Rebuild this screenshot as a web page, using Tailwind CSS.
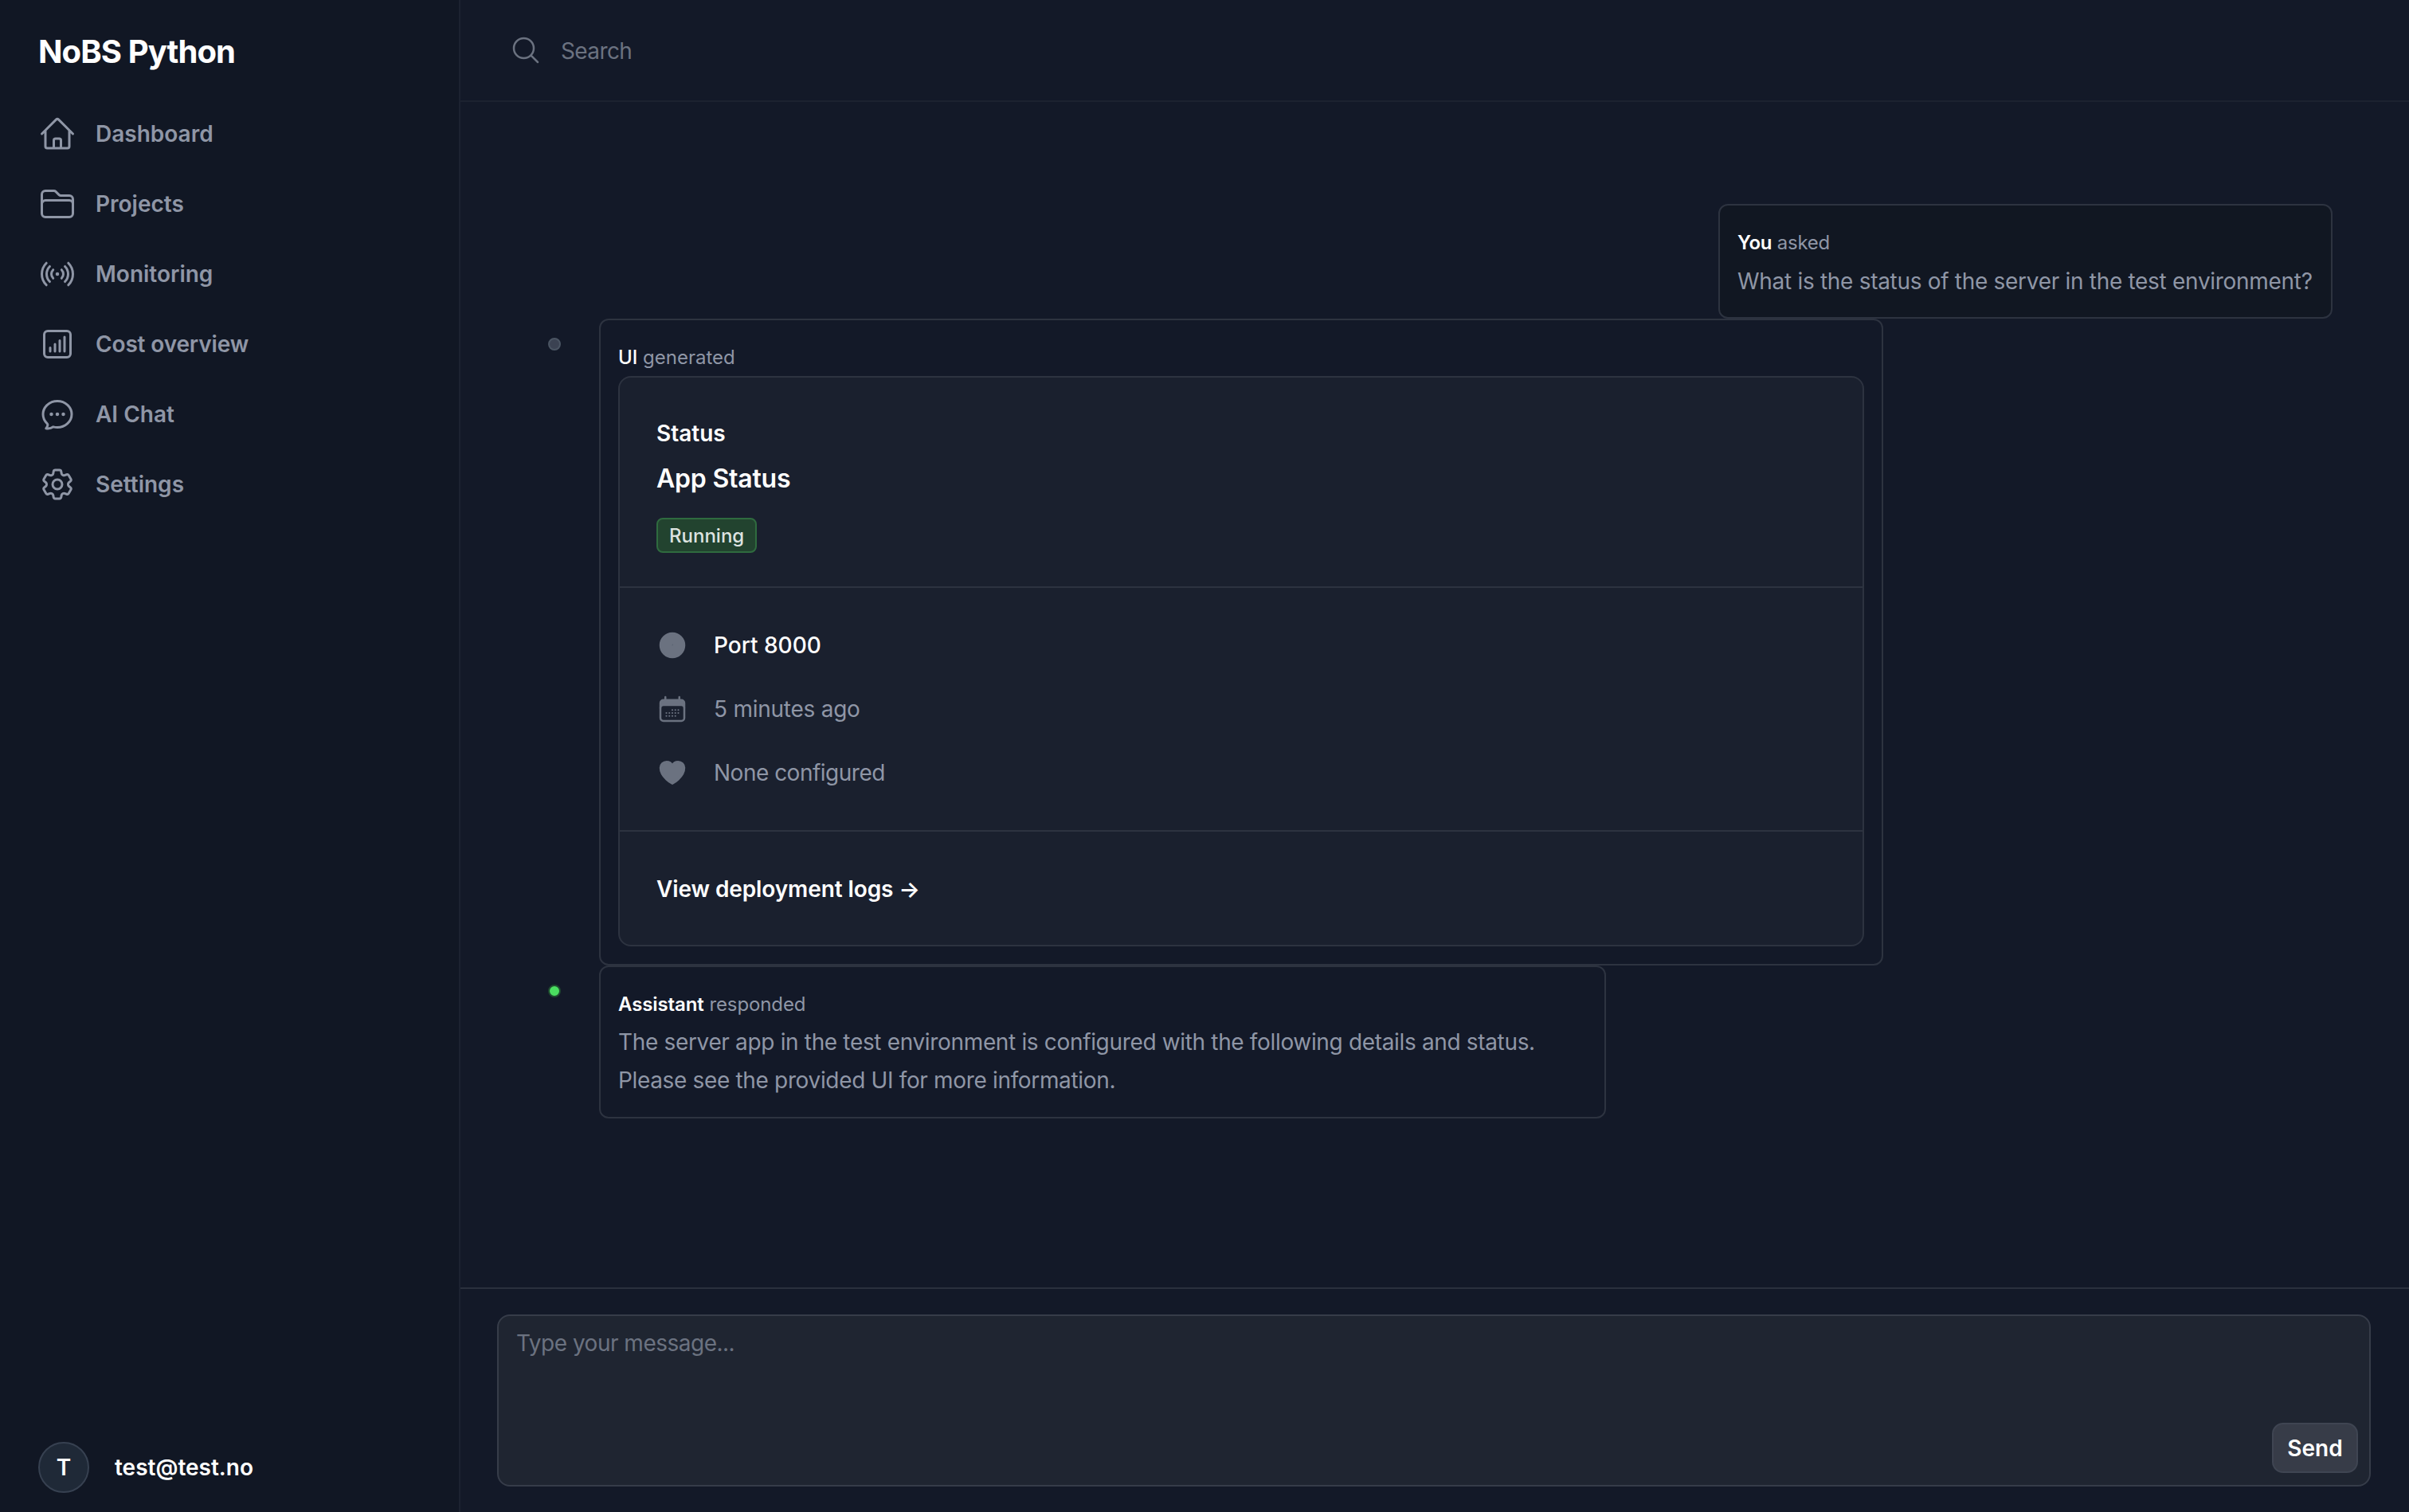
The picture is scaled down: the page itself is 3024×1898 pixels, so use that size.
<!DOCTYPE html>
<html lang="en">
<head>
<meta charset="utf-8">
<title>NoBS Python</title>
<script src="https://cdn.jsdelivr.net/npm/@tailwindcss/browser@4"></script>
</head>
<body class="m-0 bg-[#131928]">
<div class="flex h-[1898px] w-[3024px] overflow-hidden bg-[#131928] font-['Inter',sans-serif] text-[28px] leading-[48px] text-[#8f96a6]">

  <aside class="flex w-[578px] shrink-0 flex-col border-r-2 border-[#1c2230] bg-[#111724] pl-[48px] pt-[37px] pb-[24px]">
    <div class="h-[56px] text-[40px] font-bold leading-[56px] tracking-[-0.9px] text-white">NoBS Python</div>
    <nav class="mt-[31px] flex flex-col text-[#8f96a6]">
      <a class="flex h-[88px] items-center gap-[24px] font-semibold">
        <svg class="h-[48px] w-[48px]" fill="none" viewBox="0 0 24 24" stroke="currentColor" stroke-width="1.5" stroke-linecap="round" stroke-linejoin="round"><path d="m2.25 12 8.954-8.955c.44-.439 1.152-.439 1.591 0L21.75 12M4.5 9.75v10.125c0 .621.504 1.125 1.125 1.125H9.75v-4.875c0-.621.504-1.125 1.125-1.125h2.25c.621 0 1.125.504 1.125 1.125V21h4.125c.621 0 1.125-.504 1.125-1.125V9.75M8.25 21h8.25"/></svg>
        Dashboard</a>
      <a class="flex h-[88px] items-center gap-[24px] font-semibold">
        <svg class="h-[48px] w-[48px]" fill="none" viewBox="0 0 24 24" stroke="currentColor" stroke-width="1.5" stroke-linecap="round" stroke-linejoin="round"><path d="M2.25 12.75V12A2.25 2.25 0 0 1 4.5 9.75h15A2.25 2.25 0 0 1 21.75 12v.75m-8.69-6.44-2.12-2.12a1.5 1.5 0 0 0-1.061-.44H4.5A2.25 2.25 0 0 0 2.25 6v12a2.25 2.25 0 0 0 2.25 2.25h15A2.25 2.25 0 0 0 21.75 18V9a2.25 2.25 0 0 0-2.25-2.25h-5.379a1.5 1.5 0 0 1-1.06-.44Z"/></svg>
        Projects</a>
      <a class="flex h-[88px] items-center gap-[24px] font-semibold">
        <svg class="h-[48px] w-[48px]" fill="none" viewBox="0 0 24 24" stroke="currentColor" stroke-width="1.5" stroke-linecap="round" stroke-linejoin="round"><path d="M9.348 14.652a3.75 3.75 0 0 1 0-5.304m5.304 0a3.75 3.75 0 0 1 0 5.304m-7.425 2.121a6.75 6.75 0 0 1 0-9.546m9.546 0a6.75 6.75 0 0 1 0 9.546M5.106 18.894c-3.808-3.807-3.808-9.98 0-13.788m13.788 0c3.808 3.807 3.808 9.98 0 13.788M12 12h.008v.008H12V12Zm.375 0a.375.375 0 1 1-.75 0 .375.375 0 0 1 .75 0Z"/></svg>
        Monitoring</a>
      <a class="flex h-[88px] items-center gap-[24px] font-semibold tracking-[-0.15px]">
        <svg class="h-[48px] w-[48px]" fill="none" viewBox="0 0 24 24" stroke="currentColor" stroke-width="1.5" stroke-linecap="round" stroke-linejoin="round"><path d="M7.5 14.25v2.25m3-4.5v4.5m3-6.75v6.75m3-9v9M6 20.25h12A2.25 2.25 0 0 0 20.25 18V6A2.25 2.25 0 0 0 18 3.75H6A2.25 2.25 0 0 0 3.75 6v12A2.25 2.25 0 0 0 6 20.25Z"/></svg>
        Cost overview</a>
      <a class="flex h-[88px] items-center gap-[24px] font-semibold">
        <svg class="h-[48px] w-[48px]" fill="none" viewBox="0 0 24 24" stroke="currentColor" stroke-width="1.5" stroke-linecap="round" stroke-linejoin="round"><path d="M8.625 12a.375.375 0 1 1-.75 0 .375.375 0 0 1 .75 0Zm0 0H8.25m4.125 0a.375.375 0 1 1-.75 0 .375.375 0 0 1 .75 0Zm0 0H12m4.125 0a.375.375 0 1 1-.75 0 .375.375 0 0 1 .75 0Zm0 0h-.375M21 12c0 4.556-4.03 8.25-9 8.25a9.764 9.764 0 0 1-2.555-.337A5.972 5.972 0 0 1 5.41 20.97a5.969 5.969 0 0 1-.474-.065 4.48 4.48 0 0 0 .978-2.025c.09-.457-.133-.901-.467-1.226C3.93 16.178 3 14.189 3 12c0-4.556 4.03-8.25 9-8.25s9 3.694 9 8.25Z"/></svg>
        AI Chat</a>
      <a class="flex h-[88px] items-center gap-[24px] font-semibold">
        <svg class="h-[48px] w-[48px]" fill="none" viewBox="0 0 24 24" stroke="currentColor" stroke-width="1.5" stroke-linecap="round" stroke-linejoin="round"><path d="M9.594 3.94c.09-.542.56-.94 1.11-.94h2.593c.55 0 1.02.398 1.11.94l.213 1.281c.063.374.313.686.645.87.074.04.147.083.22.127.325.196.72.257 1.075.124l1.217-.456a1.125 1.125 0 0 1 1.37.49l1.296 2.247a1.125 1.125 0 0 1-.26 1.431l-1.003.827c-.293.241-.438.613-.43.992a7.723 7.723 0 0 1 0 .255c-.008.378.137.75.43.991l1.004.827c.424.35.534.955.26 1.43l-1.298 2.247a1.125 1.125 0 0 1-1.369.491l-1.217-.456c-.355-.133-.75-.072-1.076.124a6.47 6.47 0 0 1-.22.128c-.331.183-.581.495-.644.869l-.213 1.281c-.09.543-.56.94-1.11.94h-2.594c-.55 0-1.019-.398-1.11-.94l-.213-1.281c-.062-.374-.312-.686-.644-.87a6.52 6.52 0 0 1-.22-.127c-.325-.196-.72-.257-1.076-.124l-1.217.456a1.125 1.125 0 0 1-1.369-.49l-1.297-2.247a1.125 1.125 0 0 1 .26-1.431l1.004-.827c.292-.24.437-.613.43-.991a6.932 6.932 0 0 1 0-.255c.007-.38-.138-.751-.43-.992l-1.004-.827a1.125 1.125 0 0 1-.26-1.43l1.297-2.247a1.125 1.125 0 0 1 1.37-.491l1.216.456c.356.133.751.072 1.076-.124.072-.044.146-.086.22-.128.332-.183.582-.495.644-.869l.214-1.28Z"/><path d="M15 12a3 3 0 1 1-6 0 3 3 0 0 1 6 0Z"/></svg>
        Settings</a>
    </nav>
    <div class="mt-auto flex items-center gap-[32px]">
      <div class="flex h-[64px] w-[64px] items-center justify-center rounded-full border-2 border-[#374151] bg-[#1f2937] font-semibold text-white">T</div>
      <div class="font-semibold text-white">test@test.no</div>
    </div>
  </aside>

  <main class="flex min-w-0 flex-1 flex-col">
    <header class="flex h-[128px] shrink-0 items-center gap-[24px] border-b-2 border-[#1c2230] pl-[62px] text-[#6b7280]">
      <svg class="h-[40px] w-[40px]" fill="none" viewBox="0 0 24 24" stroke="currentColor" stroke-width="1.5" stroke-linecap="round" stroke-linejoin="round"><path d="m21 21-5.197-5.197m0 0A7.5 7.5 0 1 0 5.196 5.196a7.5 7.5 0 0 0 10.607 10.607Z"/></svg>
      <span class="pt-[2px] tracking-[-0.6px]">Search</span>
    </header>

    <section class="flex min-h-0 flex-1 flex-col pl-[110px] pr-[96px] pt-[128px]">
      <div class="ml-auto h-[144px] w-[771px] rounded-[12px] border-2 border-[#2d3340] bg-[#111722] pl-[22px] pt-[23px] whitespace-nowrap">
        <div class="text-[24px] leading-[48px] tracking-[-0.25px]"><span class="font-semibold text-white">You</span> asked</div>
        <p class="leading-[48px] tracking-[-0.3px]">What is the status of the server in the test environment?</p>
      </div>

      <div class="flex gap-[48px]">
        <span class="mt-[24px] h-[16px] w-[16px] shrink-0 rounded-full border-2 border-[#4b5563] bg-[#3b4252]"></span>
        <div class="w-[1612px] rounded-[12px] border-2 border-[#2d3340] px-[22px] pb-[22px] pt-[22px]">
          <div class="h-[48px] pt-[1px] text-[24px] leading-[48px]"><span class="font-medium text-white">UI</span> generated</div>
          <div class="rounded-[16px] border-2 border-[#2d3340] bg-[#1a202e]">
            <div class="border-b-2 border-[#2d3340] px-[46px] pb-[41px] pt-[46px]">
              <div class="h-[48px] font-semibold leading-[48px] text-white">Status</div>
              <div class="mt-[8px] h-[48px] pt-[1px] text-[32px] font-semibold leading-[48px] tracking-[-0.2px] text-white">App Status</div>
              <div class="mt-[26px] inline-flex h-[44px] items-center rounded-[8px] border-2 border-[#2f6b3f] bg-[#22432f] px-[14px] pt-[1px] text-[24px] font-medium text-[#dde3e0]">Running</div>
            </div>
            <div class="flex flex-col border-b-2 border-[#2d3340] px-[46px] pb-[32px] pt-[32px]">
              <div class="flex h-[80px] items-center gap-[32px] font-medium text-white">
                <svg class="h-[40px] w-[40px] text-[#6b7280]" fill="currentColor" viewBox="0 0 24 24" stroke="currentColor" stroke-width="1.5"><circle cx="12" cy="12" r="9"/><path d="M12.2 11.2 12 12.2" stroke="#4b5563" stroke-width=".4"/></svg>
                Port 8000</div>
              <div class="flex h-[80px] items-center gap-[32px] tracking-[-0.25px]">
                <svg class="h-[40px] w-[40px] text-[#6b7280]" fill="none" viewBox="0 0 24 24" stroke="currentColor" stroke-width="1.5" stroke-linecap="round" stroke-linejoin="round"><path fill="currentColor" d="M3 11.25V7.5a2.25 2.25 0 0 1 2.25-2.25h13.5A2.25 2.25 0 0 1 21 7.5v3.75A2.25 2.25 0 0 0 18.75 9H5.25A2.25 2.25 0 0 0 3 11.25Z"/><path d="M6.75 3v2.25M17.25 3v2.25M3 11.25v7.5A2.25 2.25 0 0 0 5.25 21h13.5A2.25 2.25 0 0 0 21 18.75v-7.5"/><path stroke-width="1.3" d="M12 12.75h.01M14.25 12.75h.01M16.5 12.75h.01M7.5 15h.01M9.75 15h.01M12 15h.01M14.25 15h.01M16.5 15h.01M7.5 17.25h.01M9.75 17.25h.01M12 17.25h.01M14.25 17.25h.01"/></svg>
                5 minutes ago</div>
              <div class="flex h-[80px] items-center gap-[32px] tracking-[-0.5px]">
                <svg class="h-[40px] w-[40px] text-[#6b7280]" fill="currentColor" viewBox="0 0 24 24" stroke="currentColor" stroke-width="1.5" stroke-linecap="round" stroke-linejoin="round"><path d="M21 8.25c0-2.485-2.099-4.5-4.688-4.5-1.935 0-3.597 1.126-4.312 2.733-.715-1.607-2.377-2.733-4.313-2.733C5.1 3.75 3 5.765 3 8.25c0 7.22 9 12 9 12s9-4.78 9-12Z"/></svg>
                None configured</div>
            </div>
            <div class="flex h-[142px] items-center px-[46px] pt-[2px] font-semibold tracking-[-0.1px] text-white">View deployment logs →</div>
          </div>
        </div>
      </div>

      <div class="flex gap-[48px]">
        <span class="mt-[24px] h-[16px] w-[16px] shrink-0 rounded-full border-2 border-[#1f4a30] bg-[#4ade60]"></span>
        <div class="w-[1264px] rounded-[12px] border-2 border-[#2d3340] px-[22px] pb-[22px] pt-[22px]">
          <div class="h-[48px] pt-[1px] text-[24px] leading-[48px] tracking-[-0.1px]"><span class="font-semibold text-white">Assistant</span> responded</div>
          <p class="leading-[48px] tracking-[-0.34px]">The server app in the test environment is configured with the following details and status.<br>Please see the provided UI for more information.</p>
        </div>
      </div>
    </section>

    <footer class="shrink-0 border-t-2 border-[#2a303d] pb-[32px] pl-[46px] pr-[48px] pt-[32px]">
      <div class="relative h-[216px]">
        <textarea class="h-full w-full resize-none rounded-[16px] border-2 border-[#363c49] bg-[#1f2531] px-[22px] py-[10px] tracking-[-0.5px] text-[#6b7280] outline-none placeholder:text-[#6b7280]" placeholder="Type your message..."></textarea>
        <button class="absolute bottom-[17px] right-[16px] flex h-[63px] w-[108px] items-center justify-center rounded-[14px] border-2 border-[#3f4552] bg-[#373c48] font-semibold text-white">Send</button>
      </div>
    </footer>
  </main>
</div>
</body>
</html>
